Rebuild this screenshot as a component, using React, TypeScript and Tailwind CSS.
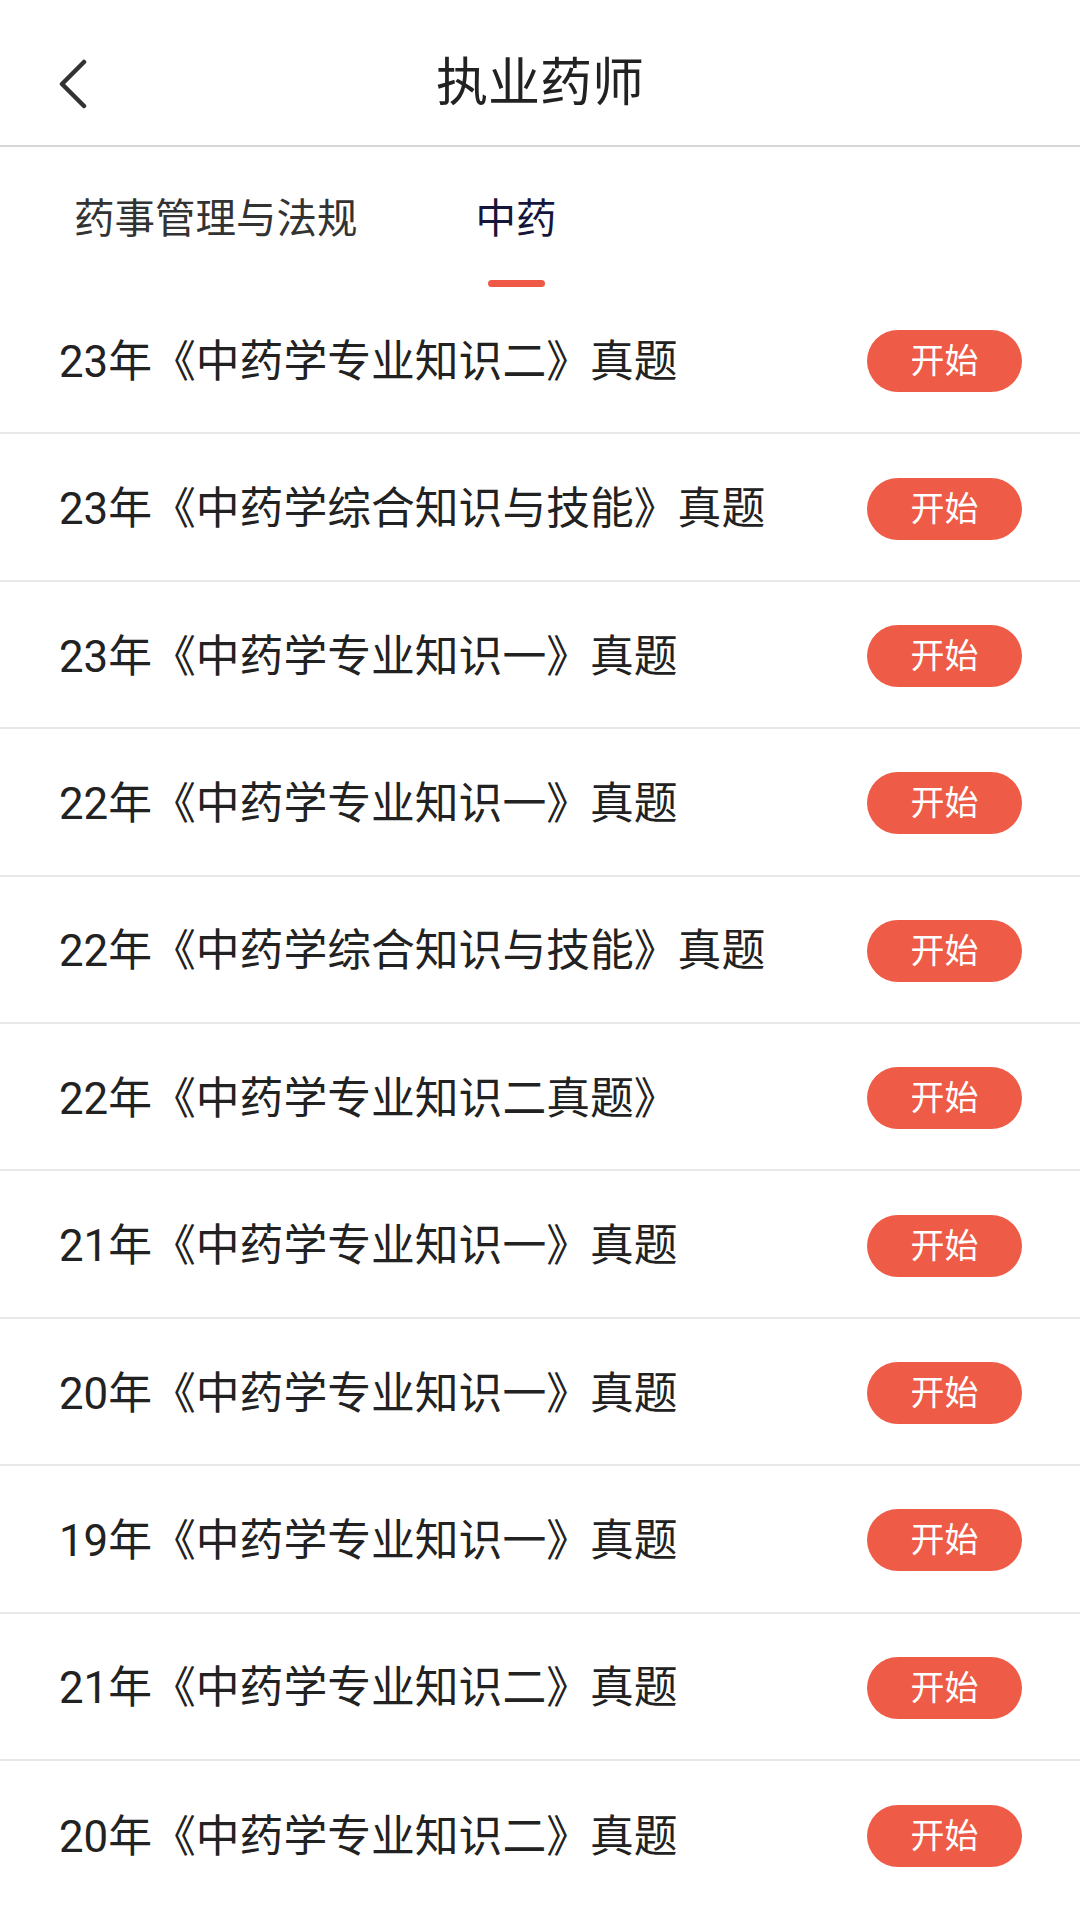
import { useState } from 'react';

const papers = [
  '23年《中药学专业知识二》真题',
  '23年《中药学综合知识与技能》真题',
  '23年《中药学专业知识一》真题',
  '22年《中药学专业知识一》真题',
  '22年《中药学综合知识与技能》真题',
  '22年《中药学专业知识二真题》',
  '21年《中药学专业知识一》真题',
  '20年《中药学专业知识一》真题',
  '19年《中药学专业知识一》真题',
  '21年《中药学专业知识二》真题',
  '20年《中药学专业知识二》真题',
];

const tabs = ['药事管理与法规', '中药'];

export default function App() {
  const [active, setActive] = useState(1);

  return (
    <div className="w-[1080px] min-h-[1920px] bg-white font-['Roboto','Noto_Sans_CJK_SC',sans-serif]">
      {/* header */}
      <div className="h-[147px] border-b-2 border-[#d6d6d6] pt-[22px] grid grid-cols-[1fr_auto_1fr] items-center">
        <div className="pl-[58px] flex items-center">
          <svg width="30" height="50" viewBox="0 0 30 50" fill="none">
            <path d="M26 3 L4 25 L26 47" stroke="#333333" strokeWidth="4.5" strokeLinecap="round" strokeLinejoin="round" />
          </svg>
        </div>
        <h1 className="text-[52px] leading-none text-[#222222] font-normal">执业药师</h1>
        <div />
      </div>

      {/* tabs */}
      <div className="h-[140px] flex pl-[74px] gap-[118px]">
        {tabs.map((t, i) => (
          <button
            key={t}
            onClick={() => setActive(i)}
            className="flex flex-col items-center pt-[52px]"
          >
            <span
              className={
                i === active
                  ? 'text-[40.5px] leading-none text-[#16163a]'
                  : 'text-[40.5px] leading-none text-[#333333]'
              }
            >
              {t}
            </span>
            <span
              className={
                i === active
                  ? 'mt-[40px] w-[57px] h-[8px] rounded-full bg-[#ee5a47]'
                  : 'mt-[40px] w-[57px] h-[8px] rounded-full bg-transparent'
              }
            />
          </button>
        ))}
      </div>

      {/* list */}
      <div>
        {papers.map((p, i) => (
          <div
            key={i}
            className="h-[147.4px] flex items-center justify-between pl-[59px] pr-[58px] border-b-2 border-[#e8e8e8] last:border-b-0"
          >
            <span className="mt-[6px] text-[43.8px] leading-none text-[#222222]">{p}</span>
            <button className="mt-[3px] w-[155px] h-[62px] rounded-full bg-[#ee5b47] text-white text-[34px] leading-none flex items-center justify-center">
              开始
            </button>
          </div>
        ))}
      </div>
    </div>
  );
}
